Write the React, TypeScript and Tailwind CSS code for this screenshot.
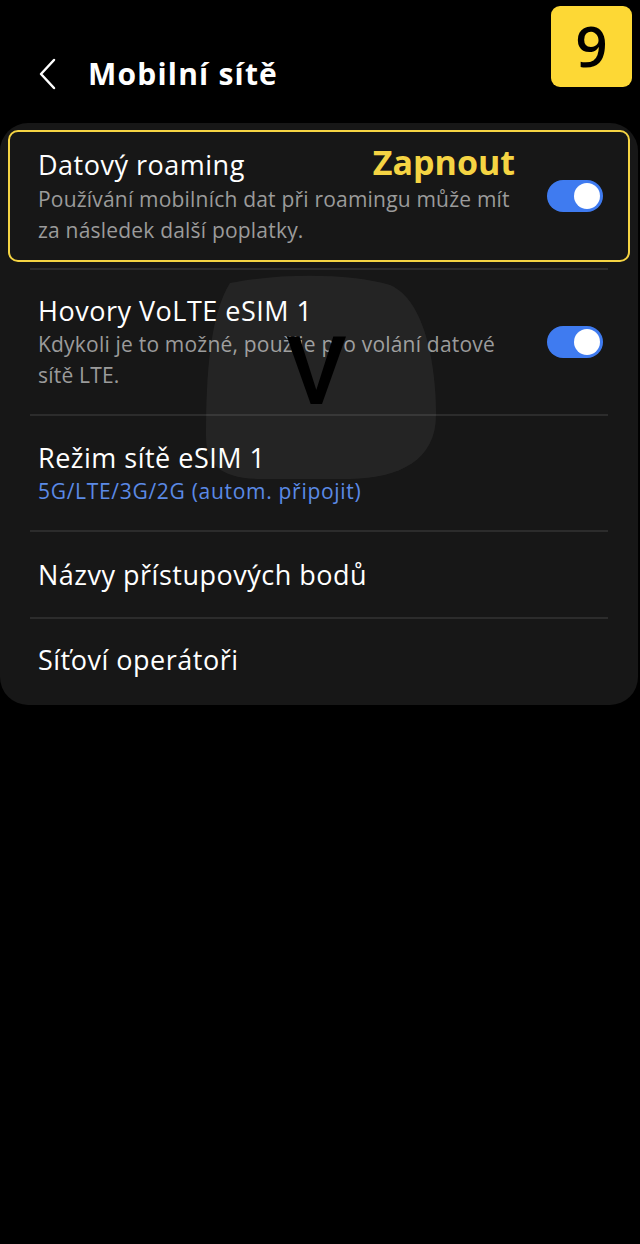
import React from 'react';

const Toggle = () => (
  <div className="w-[56px] h-[32px] rounded-full bg-[#3f7bf0] flex items-center justify-end pr-[3px] shrink-0">
    <div className="w-[26px] h-[26px] rounded-full bg-white" />
  </div>
);

const Divider = () => <div className="mx-[30px] h-[2px] bg-[#2c2c2c]" />;

export default function App() {
  return (
    <div className="w-[640px] h-[1244px] bg-black text-white overflow-hidden" style={{ fontFamily: '"Open Sans", "Noto Sans", sans-serif' }}>
      {/* Header */}
      <div className="relative h-[123px]">
        <div className="flex items-center pt-[52px] pl-[36px]">
          <svg width="24" height="34" viewBox="0 0 24 34" fill="none">
            <path d="M18 3 L5 17 L18 31" stroke="white" strokeWidth="2.5" strokeLinecap="round" strokeLinejoin="round" />
          </svg>
          <h1 className="ml-[28px] text-[30px] font-bold leading-[44px] tracking-[1.2px]">Mobilní sítě</h1>
        </div>
        <div className="absolute right-[8px] top-[6px] w-[81px] h-[81px] rounded-[9px] bg-[#fdd835] flex items-center justify-center text-black text-[56px] font-semibold leading-none pb-[4px]">
          9
        </div>
      </div>

      {/* Card */}
      <div className="relative bg-[#171717] rounded-[28px] mr-[2px] pt-[7px] pb-[4px]">
        <div className="mx-[8px] border-2 border-[#f5d443] rounded-[10px] h-[132px] flex items-center pl-[28px] pr-[25px]">
          <div className="flex-1">
            <div className="flex items-center">
              <span className="text-[27px] leading-[36px] tracking-[0.5px]">Datový roaming</span>
              <span className="ml-[128px] text-[34px] font-bold text-[#f5d443] leading-[36px] -mt-[6px]">Zapnout</span>
            </div>
            <p className="text-[21px] leading-[31px] text-[#9b9b9b] mt-[1px] tracking-[0.2px]">
              Používání mobilních dat při roamingu může mít
              <br />
              za následek další poplatky.
            </p>
          </div>
          <Toggle />
        </div>
        <div className="h-[6px]" />
        <Divider />

        <div className="flex items-center pl-[38px] pr-[35px] h-[144px]">
          <div className="flex-1">
            <div className="text-[27px] leading-[36px] tracking-[0.5px]">Hovory VoLTE eSIM 1</div>
            <p className="text-[21px] leading-[31px] text-[#9b9b9b] tracking-[0.2px]">
              Kdykoli je to možné, použije pro volání datové
              <br />
              sítě LTE.
            </p>
          </div>
          <Toggle />
        </div>
        <Divider />

        <div className="flex flex-col justify-center pl-[38px] h-[114px]">
          <div className="text-[27px] leading-[36px] tracking-[0.5px]">Režim sítě eSIM 1</div>
          <div className="text-[21px] leading-[31px] text-[#5b8ae6] tracking-[0.7px]">5G/LTE/3G/2G (autom. připojit)</div>
        </div>
        <Divider />

        <div className="flex items-center pl-[38px] h-[85px]">
          <div className="text-[27px] leading-[36px] tracking-[0.5px]">Názvy přístupových bodů</div>
        </div>
        <Divider />

        <div className="flex items-center pl-[38px] h-[82px]">
          <div className="text-[27px] leading-[36px] tracking-[0.5px]">Síťoví operátoři</div>
        </div>

        {/* watermark */}
        <div className="absolute left-[200px] top-[152px] w-[240px] h-[205px] pointer-events-none">
          <svg width="240" height="205" viewBox="0 0 240 205" className="absolute inset-0">
            <path d="M30 8 C 80 -2, 150 -2, 190 10 C 225 25, 236 90, 236 140 C 236 185, 200 203, 150 204 L 60 204 C 20 203, 6 190, 6 160 C 6 100, 10 40, 30 8 Z" fill="#ffffff" fillOpacity="0.06" />
          </svg>
          <div className="absolute left-[86px] top-[50px] text-[94px] leading-[94px] text-black font-medium" style={{ fontFamily: 'Roboto, sans-serif' }}>V</div>
        </div>
      </div>
    </div>
  );
}
